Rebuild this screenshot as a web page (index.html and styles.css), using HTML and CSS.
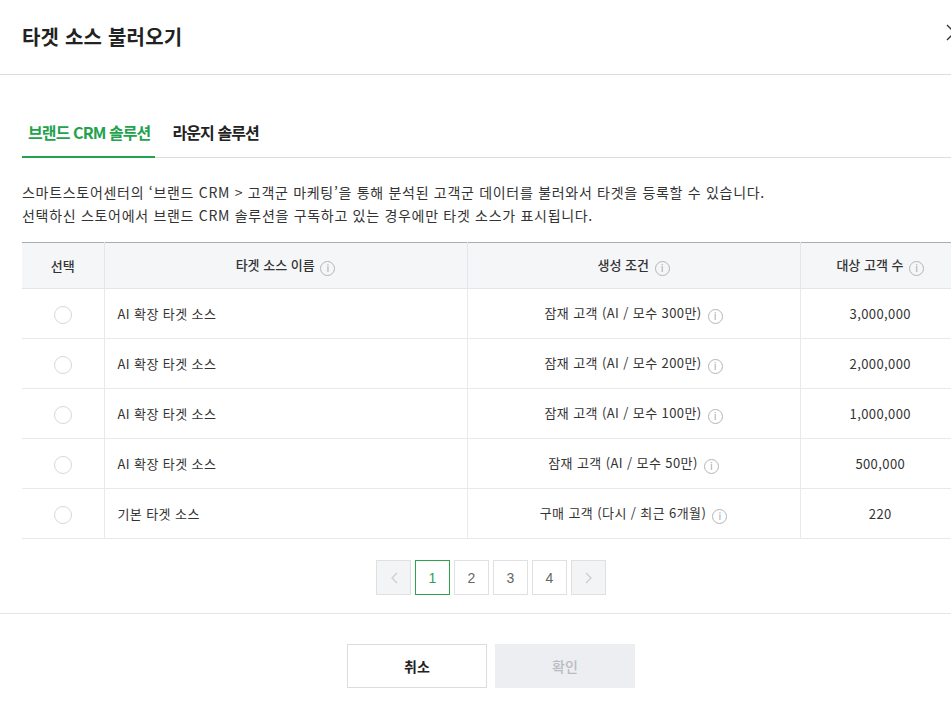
FILE: index.html
```html
<!DOCTYPE html>
<html lang="ko">
<head>
    <meta charset="UTF-8">
    <title>타겟 소스 불러오기</title>
    <link rel="stylesheet" href="styles.css">
</head>
<body>
    <div class="modal">
        <header class="modal_head">
            <h1>타겟 소스 불러오기</h1>
            <button class="close_btn" aria-label="닫기">
                <svg width="17" height="17" viewBox="0 0 17 17">
                    <path d="M1 1 L16 16 M16 1 L1 16" stroke="#333" stroke-width="1.3" fill="none"/>
                </svg>
            </button>
        </header>
        <div class="modal_body">
            <ul class="tabs">
                <li class="tab active">브랜드 CRM 솔루션</li>
                <li class="tab">라운지 솔루션</li>
            </ul>
            <p class="desc">
                스마트스토어센터의 ‘브랜드 CRM &gt; 고객군 마케팅’을 통해 분석된 고객군 데이터를 불러와서 타겟을 등록할 수 있습니다.<br>
                선택하신 스토어에서 브랜드 CRM 솔루션을 구독하고 있는 경우에만 타겟 소스가 표시됩니다.
            </p>
            <table class="source_table">
                <colgroup>
                    <col class="col_select">
                    <col class="col_name">
                    <col class="col_cond">
                    <col class="col_count">
                </colgroup>
                <thead>
                    <tr>
                        <th>선택</th>
                        <th>타겟 소스 이름 <i class="info">i</i></th>
                        <th>생성 조건 <i class="info">i</i></th>
                        <th>대상 고객 수 <i class="info">i</i></th>
                    </tr>
                </thead>
                <tbody id="rows"></tbody>
            </table>
            <div class="pager">
                <button class="page arrow" disabled>
                    <svg width="8" height="12" viewBox="0 0 8 12"><path d="M7 1 L2 6 L7 11" stroke="#ccc" stroke-width="1.2" fill="none"/></svg>
                </button>
                <button class="page current">1</button>
                <button class="page">2</button>
                <button class="page">3</button>
                <button class="page">4</button>
                <button class="page arrow" disabled>
                    <svg width="8" height="12" viewBox="0 0 8 12"><path d="M1 1 L6 6 L1 11" stroke="#ccc" stroke-width="1.2" fill="none"/></svg>
                </button>
            </div>
        </div>
        <footer class="modal_foot">
            <button class="btn cancel">취소</button>
            <button class="btn confirm" disabled>확인</button>
        </footer>
    </div>
    <script>
        const sources = [
            {name: 'AI 확장 타겟 소스', cond: '잠재 고객 (AI / 모수 300만)', count: '3,000,000'},
            {name: 'AI 확장 타겟 소스', cond: '잠재 고객 (AI / 모수 200만)', count: '2,000,000'},
            {name: 'AI 확장 타겟 소스', cond: '잠재 고객 (AI / 모수 100만)', count: '1,000,000'},
            {name: 'AI 확장 타겟 소스', cond: '잠재 고객 (AI / 모수 50만)', count: '500,000'},
            {name: '기본 타겟 소스', cond: '구매 고객 (다시 / 최근 6개월)', count: '220'}
        ]

        function createRows(list) {
            let html = ''
            for(let item of list) {
                html += `
                    <tr>
                        <td class="center"><span class="radio"></span></td>
                        <td class="name">${item.name}</td>
                        <td class="center">${item.cond} <i class="info">i</i></td>
                        <td class="center">${item.count}</td>
                    </tr>
                `
            }
            return html
        }

        document.getElementById('rows').innerHTML = createRows(sources)
    </script>
</body>
</html>
```

FILE: styles.css
```css
html, body {
    margin: 0;
    padding: 0;
    overflow: hidden;
    background: #fff;
}
body {
    font-family: "Noto Sans CJK KR", "Noto Sans", sans-serif;
    color: #333;
}
.modal {
    width: 982px;
    background: #fff;
}
.modal_head {
    display: flex;
    align-items: center;
    justify-content: space-between;
    height: 74px;
    padding: 0 19px 0 22px;
    border-bottom: 1px solid #ddd;
}
.modal_head h1 {
    margin: 0 0 2px;
    font-size: 20px;
    font-weight: 700;
    color: #222;
    letter-spacing: 0.2px;
}
.close_btn {
    border: none;
    background: none;
    padding: 0;
    width: 17px;
    height: 17px;
    margin-top: -9px;
}
.modal_body {
    padding: 35px 22px 18px;
    border-bottom: 1px solid #e5e5e5;
}
.tabs {
    display: flex;
    list-style: none;
    margin: 0;
    padding: 0;
    border-bottom: 1px solid #ddd;
}
.tab {
    font-size: 16px;
    font-weight: 700;
    line-height: 20px;
    letter-spacing: -0.9px;
    padding: 12px 5px 14px 6px;
    margin-bottom: -1px;
    border-bottom: 2px solid transparent;
    color: #222;
}
.tab + .tab {
    margin-left: 11px;
}
.tab.active {
    color: #23a24d;
    border-bottom-color: #23a24d;
}
.desc {
    margin: 23px 0 15px;
    font-size: 14px;
    line-height: 23px;
    letter-spacing: 0.7px;
    color: #333;
}
.source_table {
    width: 938px;
    border-collapse: collapse;
    table-layout: fixed;
    border-top: 1px solid #a9adb2;
    font-size: 13px;
    letter-spacing: 0.4px;
}
.col_select { width: 82px; }
.col_name { width: 363px; }
.col_cond { width: 333px; }
.col_count { width: 160px; }
.source_table th {
    height: 45px;
    background: #f5f6f8;
    font-weight: 500;
    color: #333;
    border-bottom: 1px solid #e3e5e8;
    border-left: 1px solid #e3e5e8;
    padding: 0;
    letter-spacing: 0;
}
.source_table td {
    height: 49px;
    border-bottom: 1px solid #e8e9eb;
    border-left: 1px solid #e8e9eb;
    padding: 0;
    color: #333;
}
.source_table th:first-child,
.source_table td:first-child {
    border-left: none;
}
.source_table td.center {
    text-align: center;
}
.source_table td.name {
    padding-left: 13px;
}
.radio {
    display: inline-block;
    width: 16px;
    height: 16px;
    border: 1px solid #d6d8db;
    border-radius: 50%;
    vertical-align: middle;
}
.info {
    display: inline-block;
    width: 13px;
    height: 13px;
    border: 1px solid #b5b5b5;
    border-radius: 50%;
    font-style: normal;
    font-size: 10px;
    line-height: 13px;
    text-align: center;
    color: #aaa;
    vertical-align: -2px;
    margin-left: 2px;
    font-family: "DejaVu Sans", sans-serif;
    letter-spacing: 0;
}
.pager {
    display: flex;
    justify-content: center;
    gap: 4px;
    margin-top: 21px;
}
.page {
    width: 35px;
    height: 35px;
    border: 1px solid #e0e0e0;
    background: #fff;
    font-family: "Liberation Sans", sans-serif;
    font-size: 14px;
    color: #666;
    padding: 0;
    display: flex;
    align-items: center;
    justify-content: center;
}
.page.arrow {
    background: #f3f4f6;
}
.page.current {
    border-color: #2ea34f;
    color: #2ea34f;
}
.modal_foot {
    display: flex;
    justify-content: center;
    gap: 8px;
    padding: 30px 0 40px;
}
.btn {
    width: 140px;
    height: 44px;
    font-family: "Noto Sans CJK KR", sans-serif;
    font-size: 14px;
    font-weight: 700;
    border: 1px solid #dcdcdc;
    background: #fff;
    color: #222;
}
.btn.confirm {
    background: #eceef1;
    border-color: #eceef1;
    color: #b9bcc0;
    font-weight: 500;
}
```
